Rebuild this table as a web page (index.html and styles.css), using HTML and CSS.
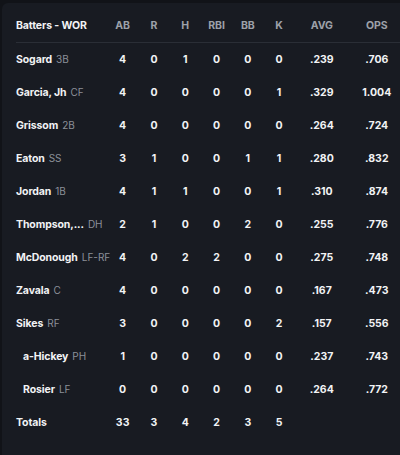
FILE: index.html
```html
<!DOCTYPE html>
<html>
<head>
<meta charset="utf-8">
<link rel="stylesheet" href="styles.css">
</head>
<body>
<div class="card">
  <div class="row head">
    <div class="name">Batters - WOR</div>
    <div>AB</div><div>R</div><div>H</div><div>RBI</div><div>BB</div><div>K</div><div>AVG</div><div>OPS</div>
  </div>
  <div class="row"><div class="name">Sogard<span class="pos">3B</span></div><div>4</div><div>0</div><div>1</div><div>0</div><div>0</div><div>0</div><div>.239</div><div>.706</div></div>
  <div class="row"><div class="name">Garcia, Jh<span class="pos">CF</span></div><div>4</div><div>0</div><div>0</div><div>0</div><div>0</div><div>1</div><div>.329</div><div>1.004</div></div>
  <div class="row"><div class="name">Grissom<span class="pos">2B</span></div><div>4</div><div>0</div><div>0</div><div>0</div><div>0</div><div>0</div><div>.264</div><div>.724</div></div>
  <div class="row"><div class="name">Eaton<span class="pos">SS</span></div><div>3</div><div>1</div><div>0</div><div>0</div><div>1</div><div>1</div><div>.280</div><div>.832</div></div>
  <div class="row"><div class="name">Jordan<span class="pos">1B</span></div><div>4</div><div>1</div><div>1</div><div>0</div><div>0</div><div>1</div><div>.310</div><div>.874</div></div>
  <div class="row"><div class="name">Thompson,...<span class="pos">DH</span></div><div>2</div><div>1</div><div>0</div><div>0</div><div>2</div><div>0</div><div>.255</div><div>.776</div></div>
  <div class="row"><div class="name">McDonough<span class="pos">LF-RF</span></div><div>4</div><div>0</div><div>2</div><div>2</div><div>0</div><div>0</div><div>.275</div><div>.748</div></div>
  <div class="row"><div class="name">Zavala<span class="pos">C</span></div><div>4</div><div>0</div><div>0</div><div>0</div><div>0</div><div>0</div><div>.167</div><div>.473</div></div>
  <div class="row"><div class="name">Sikes<span class="pos">RF</span></div><div>3</div><div>0</div><div>0</div><div>0</div><div>0</div><div>2</div><div>.157</div><div>.556</div></div>
  <div class="row sub"><div class="name">a-Hickey<span class="pos">PH</span></div><div>1</div><div>0</div><div>0</div><div>0</div><div>0</div><div>0</div><div>.237</div><div>.743</div></div>
  <div class="row sub"><div class="name">Rosier<span class="pos">LF</span></div><div>0</div><div>0</div><div>0</div><div>0</div><div>0</div><div>0</div><div>.264</div><div>.772</div></div>
  <div class="row"><div class="name">Totals</div><div>33</div><div>3</div><div>4</div><div>2</div><div>3</div><div>5</div><div></div><div></div></div>
</div>
</body>
</html>
```

FILE: styles.css
```css
html, body {
  margin: 0;
  padding: 0;
  background: #111318;
  overflow: hidden;
  width: 400px;
  height: 455px;
}
.card {
  margin: 3px 0 0 2px;
  width: 410px;
  height: 460px;
  background: #181b22;
  border-radius: 6px 0 0 0;
  font-family: Inter, "Liberation Sans", sans-serif;
  font-weight: 700;
  font-size: 10.5px;
  color: #f2f3f5;
}
.row {
  display: grid;
  grid-template-columns: 91px repeat(6, 31.3px) 54px 56px;
  align-items: center;
  height: 33px;
  padding-left: 14px;
  text-align: center;
}
.row.head {
  height: 40px;
  margin-left: 14px;
  padding-left: 0;
  padding-top: 5px;
  box-sizing: border-box;
  color: #9da1a9;
  border-bottom: 1px solid #2a2e36;
}
.row.head .name {
  color: #f2f3f5;
}
.name {
  text-align: left;
  white-space: nowrap;
  letter-spacing: -0.1px;
}
.sub .name {
  padding-left: 7px;
}
.pos {
  margin-left: 4px;
  font-weight: 400;
  font-size: 10px;
  letter-spacing: 0;
  color: #8c9099;
}
```
